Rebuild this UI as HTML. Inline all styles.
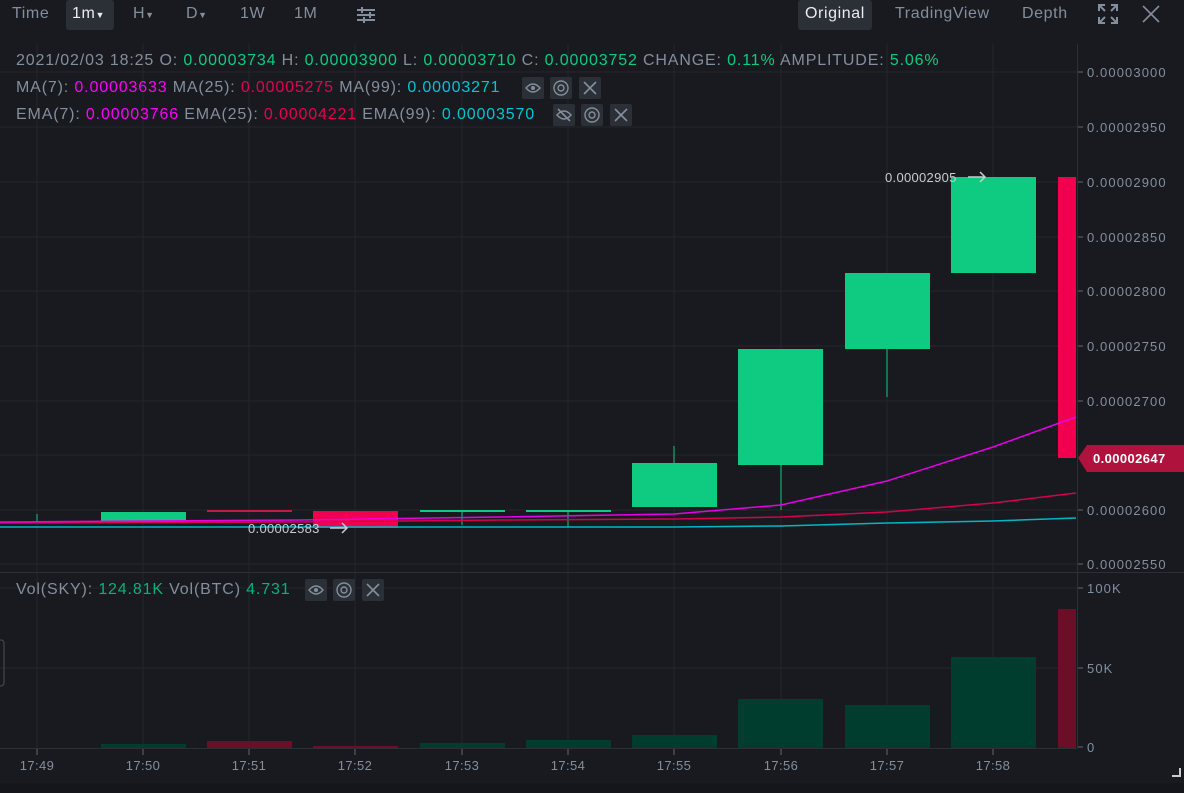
<!DOCTYPE html>
<html><head><meta charset="utf-8"><style>
html,body{margin:0;padding:0;background:#181a20;width:1184px;height:793px;overflow:hidden;font-family:"Liberation Sans",sans-serif;}
.t{position:absolute;white-space:nowrap;font-size:16px;letter-spacing:0.85px;color:#848e9c;}
.tb{letter-spacing:0.6px}
.g{color:#0ecb81}.m{color:#f0f}.r{color:#e6004f}.c{color:#00c6d3}
.btn{position:absolute;width:22px;height:22px;background:#2b2f36;border-radius:2px}
</style></head><body>
<div style="position:absolute;left:0;top:0;width:1184px;height:30px;background:#181a20"></div>
<div style="position:absolute;left:66px;top:0;width:48px;height:30px;background:#2b2f36;border-radius:3px"></div>
<div style="position:absolute;left:798px;top:0;width:74px;height:30px;background:#2b2f36;border-radius:3px"></div>
<div class="t tb" style="left:12px;top:5px">Time</div>
<div class="t tb" style="left:72px;top:5px;color:#eaecef">1m<span style="font-size:9px">▼</span></div>
<div class="t tb" style="left:133px;top:5px">H<span style="font-size:9px">▼</span></div>
<div class="t tb" style="left:186px;top:5px">D<span style="font-size:9px">▼</span></div>
<div class="t tb" style="left:240px;top:5px">1W</div>
<div class="t tb" style="left:294px;top:5px">1M</div>
<svg style="position:absolute;left:355px;top:4px" width="22" height="22"><g stroke="#848e9c" stroke-width="2"><line x1="2" y1="6" x2="20" y2="6"/><line x1="2" y1="11" x2="20" y2="11"/><line x1="2" y1="16" x2="20" y2="16"/><line x1="7" y1="3" x2="7" y2="9"/><line x1="15" y1="8" x2="15" y2="14"/><line x1="9" y1="13" x2="9" y2="19"/></g></svg>
<div class="t tb" style="left:805px;top:5px;color:#eaecef">Original</div>
<div class="t tb" style="left:895px;top:5px">TradingView</div>
<div class="t tb" style="left:1022px;top:5px">Depth</div>
<svg style="position:absolute;left:1097px;top:3px" width="22" height="22"><g stroke="#848e9c" stroke-width="2" fill="none"><path d="M2 8V2h6M14 2h6v6M20 14v6h-6M8 20H2v-6M3 3l5 5M19 3l-5 5M19 19l-5-5M3 19l5-5"/></g></svg>
<svg style="position:absolute;left:1142px;top:5px" width="18" height="18"><path d="M1 1L17 17M17 1L1 17" stroke="#848e9c" stroke-width="1.6"/></svg>

<svg style="position:absolute;left:0;top:0" width="1184" height="793">
<g stroke="#23262d" stroke-width="1">
<line x1="37" y1="44" x2="37" y2="748"/><line x1="143" y1="44" x2="143" y2="748"/><line x1="249" y1="44" x2="249" y2="748"/><line x1="355" y1="44" x2="355" y2="748"/><line x1="462" y1="44" x2="462" y2="748"/><line x1="568" y1="44" x2="568" y2="748"/><line x1="674" y1="44" x2="674" y2="748"/><line x1="781" y1="44" x2="781" y2="748"/><line x1="887" y1="44" x2="887" y2="748"/><line x1="993" y1="44" x2="993" y2="748"/>
<line x1="0" y1="72" x2="1077" y2="72"/><line x1="0" y1="127" x2="1077" y2="127"/><line x1="0" y1="182" x2="1077" y2="182"/><line x1="0" y1="237" x2="1077" y2="237"/><line x1="0" y1="291" x2="1077" y2="291"/><line x1="0" y1="346" x2="1077" y2="346"/><line x1="0" y1="401" x2="1077" y2="401"/><line x1="0" y1="455" x2="1077" y2="455"/><line x1="0" y1="510" x2="1077" y2="510"/><line x1="0" y1="564" x2="1077" y2="564"/>
<line x1="0" y1="588" x2="1077" y2="588"/><line x1="0" y1="668" x2="1077" y2="668"/>
</g>
<line x1="1077.5" y1="44" x2="1077.5" y2="748" stroke="#2b2f36"/>
<line x1="0" y1="572.5" x2="1184" y2="572.5" stroke="#2b2f36"/>
<line x1="0" y1="748.5" x2="1077" y2="748.5" stroke="#2b2f36"/>
<rect x="0" y="783" width="1184" height="10" fill="#14161b"/>
<g fill="#0ecb81" stroke="#0ecb81">
<line x1="37" y1="514" x2="37" y2="522"/>
<rect x="101" y="512" width="85" height="10" stroke="none"/>
<rect x="420" y="510" width="85" height="2" stroke="none"/><line x1="462" y1="511" x2="462" y2="525"/>
<rect x="526" y="510" width="85" height="2" stroke="none"/><line x1="568" y1="511" x2="568" y2="527"/>
<line x1="674" y1="446" x2="674" y2="463"/><rect x="632" y="463" width="85" height="44" stroke="none"/>
<line x1="781" y1="465" x2="781" y2="510"/><rect x="738" y="349" width="85" height="116" stroke="none"/>
<line x1="887" y1="349" x2="887" y2="397"/><rect x="845" y="273" width="85" height="76" stroke="none"/>
<rect x="951" y="177" width="85" height="96" stroke="none"/>
</g>
<g fill="#f0004e">
<rect x="207" y="510" width="85" height="2" fill="#c21c45"/>
<rect x="313" y="511" width="85" height="17"/>
<rect x="1058" y="177" width="18" height="281"/>
</g>
<polyline fill="none" stroke="#00b8c4" stroke-width="1.5" points="0,527 300,527 674,527 781,526 887,523 993,521 1076,518"/>
<polyline fill="none" stroke="#d6004f" stroke-width="1.5" points="0,523 300,522 500,520 674,519 781,517 887,512 993,503 1076,493"/>
<polyline fill="none" stroke="#e800e8" stroke-width="1.5" points="0,522 300,520 500,517 674,514 781,505 887,481 993,447 1076,417"/>
<g fill="#003d2e">
<rect x="101" y="744" width="85" height="4"/><rect x="420" y="743" width="85" height="5"/><rect x="526" y="740" width="85" height="8"/><rect x="632" y="735" width="85" height="13"/><rect x="738" y="699" width="85" height="49"/><rect x="845" y="705" width="85" height="43"/><rect x="951" y="657" width="85" height="91"/>
</g>
<g fill="#6b0f28">
<rect x="207" y="741" width="85" height="7"/><rect x="313" y="746" width="85" height="2"/><rect x="1058" y="609" width="18" height="139"/>
</g>
<g stroke="#5e6673"><line x1="1078" y1="72" x2="1083" y2="72"/><line x1="1078" y1="127" x2="1083" y2="127"/><line x1="1078" y1="182" x2="1083" y2="182"/><line x1="1078" y1="237" x2="1083" y2="237"/><line x1="1078" y1="291" x2="1083" y2="291"/><line x1="1078" y1="346" x2="1083" y2="346"/><line x1="1078" y1="401" x2="1083" y2="401"/><line x1="1078" y1="510" x2="1083" y2="510"/><line x1="1078" y1="564" x2="1083" y2="564"/><line x1="1078" y1="588" x2="1083" y2="588"/><line x1="1078" y1="668" x2="1083" y2="668"/><line x1="1078" y1="747" x2="1083" y2="747"/>
<line x1="37" y1="749" x2="37" y2="755"/><line x1="143" y1="749" x2="143" y2="755"/><line x1="249" y1="749" x2="249" y2="755"/><line x1="355" y1="749" x2="355" y2="755"/><line x1="462" y1="749" x2="462" y2="755"/><line x1="568" y1="749" x2="568" y2="755"/><line x1="674" y1="749" x2="674" y2="755"/><line x1="781" y1="749" x2="781" y2="755"/><line x1="887" y1="749" x2="887" y2="755"/><line x1="993" y1="749" x2="993" y2="755"/></g>
<g fill="#848e9c" font-family="Liberation Sans" font-size="13" letter-spacing="1.1">
<text x="1087" y="77">0.00003000</text><text x="1087" y="132">0.00002950</text><text x="1087" y="187">0.00002900</text><text x="1087" y="242">0.00002850</text><text x="1087" y="296">0.00002800</text><text x="1087" y="351">0.00002750</text><text x="1087" y="406">0.00002700</text><text x="1087" y="515">0.00002600</text><text x="1087" y="569">0.00002550</text>
<text x="1087" y="593">100K</text><text x="1087" y="673">50K</text><text x="1087" y="752">0</text>
</g>
<g fill="#848e9c" font-family="Liberation Sans" font-size="13" letter-spacing="0.4" text-anchor="middle"><text x="37" y="770">17:49</text><text x="143" y="770">17:50</text><text x="249" y="770">17:51</text><text x="355" y="770">17:52</text><text x="462" y="770">17:53</text><text x="568" y="770">17:54</text><text x="674" y="770">17:55</text><text x="781" y="770">17:56</text><text x="887" y="770">17:57</text><text x="993" y="770">17:58</text></g>
<g font-family="Liberation Sans" font-size="13" fill="#c8ccd2" letter-spacing="0.3">
<text x="885" y="182">0.00002905</text><text x="248" y="533">0.00002583</text></g>
<g stroke="#c8ccd2" stroke-width="1.5" fill="none"><path d="M968 177h17M980 172l5 5-5 5"/><path d="M330 528h17M342 523l5 5-5 5"/></g>
<path d="M1078 458l9-13h97v27h-97z" fill="#b0123e"/>
<text x="1093" y="463" font-family="Liberation Sans" font-size="13" font-weight="bold" fill="#fff" letter-spacing="0.4">0.00002647</text>
<path d="M1172 776h8v-8" stroke="#c8ccd2" stroke-width="2" fill="none"/>
<rect x="-6" y="640" width="10" height="46" rx="3" fill="none" stroke="#474d57"/>
</svg>

<div class="t" style="left:16px;top:52px">2021/02/03 18:25 O: <span class="g">0.00003734</span> H: <span class="g">0.00003900</span> L: <span class="g">0.00003710</span> C: <span class="g">0.00003752</span> CHANGE: <span class="g">0.11%</span> AMPLITUDE: <span class="g">5.06%</span></div>
<div class="t" style="left:16px;top:79px">MA(7): <span class="m">0.00003633</span> MA(25): <span class="r">0.00005275</span> MA(99): <span class="c">0.00003271</span></div>
<div class="t" style="left:16px;top:106px">EMA(7): <span class="m">0.00003766</span> EMA(25): <span class="r">0.00004221</span> EMA(99): <span class="c">0.00003570</span></div>
<div class="t" style="left:16px;top:581px">Vol(SKY): <span style="color:#0bb07a">124.81K</span> Vol(BTC) <span style="color:#0bb07a">4.731</span></div>

<div class="btn" style="left:522px;top:77px"><svg width="22" height="22"><path d="M4 11q7-8 14 0q-7 8-14 0z" fill="none" stroke="#848e9c" stroke-width="1.4"/><circle cx="11" cy="11" r="2" fill="#848e9c"/></svg></div>
<div class="btn" style="left:550px;top:77px"><svg width="22" height="22"><circle cx="11" cy="11" r="7" fill="none" stroke="#848e9c" stroke-width="1.4"/><circle cx="11" cy="11" r="3" fill="none" stroke="#848e9c" stroke-width="1.4"/></svg></div>
<div class="btn" style="left:579px;top:77px"><svg width="22" height="22"><path d="M5 5L17 17M17 5L5 17" stroke="#848e9c" stroke-width="1.6"/></svg></div>
<div class="btn" style="left:553px;top:104px"><svg width="22" height="22"><path d="M4 11q7-8 14 0q-7 8-14 0z" fill="none" stroke="#848e9c" stroke-width="1.4"/><path d="M5 5L17 17" stroke="#848e9c" stroke-width="1.6"/></svg></div>
<div class="btn" style="left:581px;top:104px"><svg width="22" height="22"><circle cx="11" cy="11" r="7" fill="none" stroke="#848e9c" stroke-width="1.4"/><circle cx="11" cy="11" r="3" fill="none" stroke="#848e9c" stroke-width="1.4"/></svg></div>
<div class="btn" style="left:610px;top:104px"><svg width="22" height="22"><path d="M5 5L17 17M17 5L5 17" stroke="#848e9c" stroke-width="1.6"/></svg></div>
<div class="btn" style="left:305px;top:579px"><svg width="22" height="22"><path d="M4 11q7-8 14 0q-7 8-14 0z" fill="none" stroke="#848e9c" stroke-width="1.4"/><circle cx="11" cy="11" r="2" fill="#848e9c"/></svg></div>
<div class="btn" style="left:333px;top:579px"><svg width="22" height="22"><circle cx="11" cy="11" r="7" fill="none" stroke="#848e9c" stroke-width="1.4"/><circle cx="11" cy="11" r="3" fill="none" stroke="#848e9c" stroke-width="1.4"/></svg></div>
<div class="btn" style="left:362px;top:579px"><svg width="22" height="22"><path d="M5 5L17 17M17 5L5 17" stroke="#848e9c" stroke-width="1.6"/></svg></div>
</body></html>
